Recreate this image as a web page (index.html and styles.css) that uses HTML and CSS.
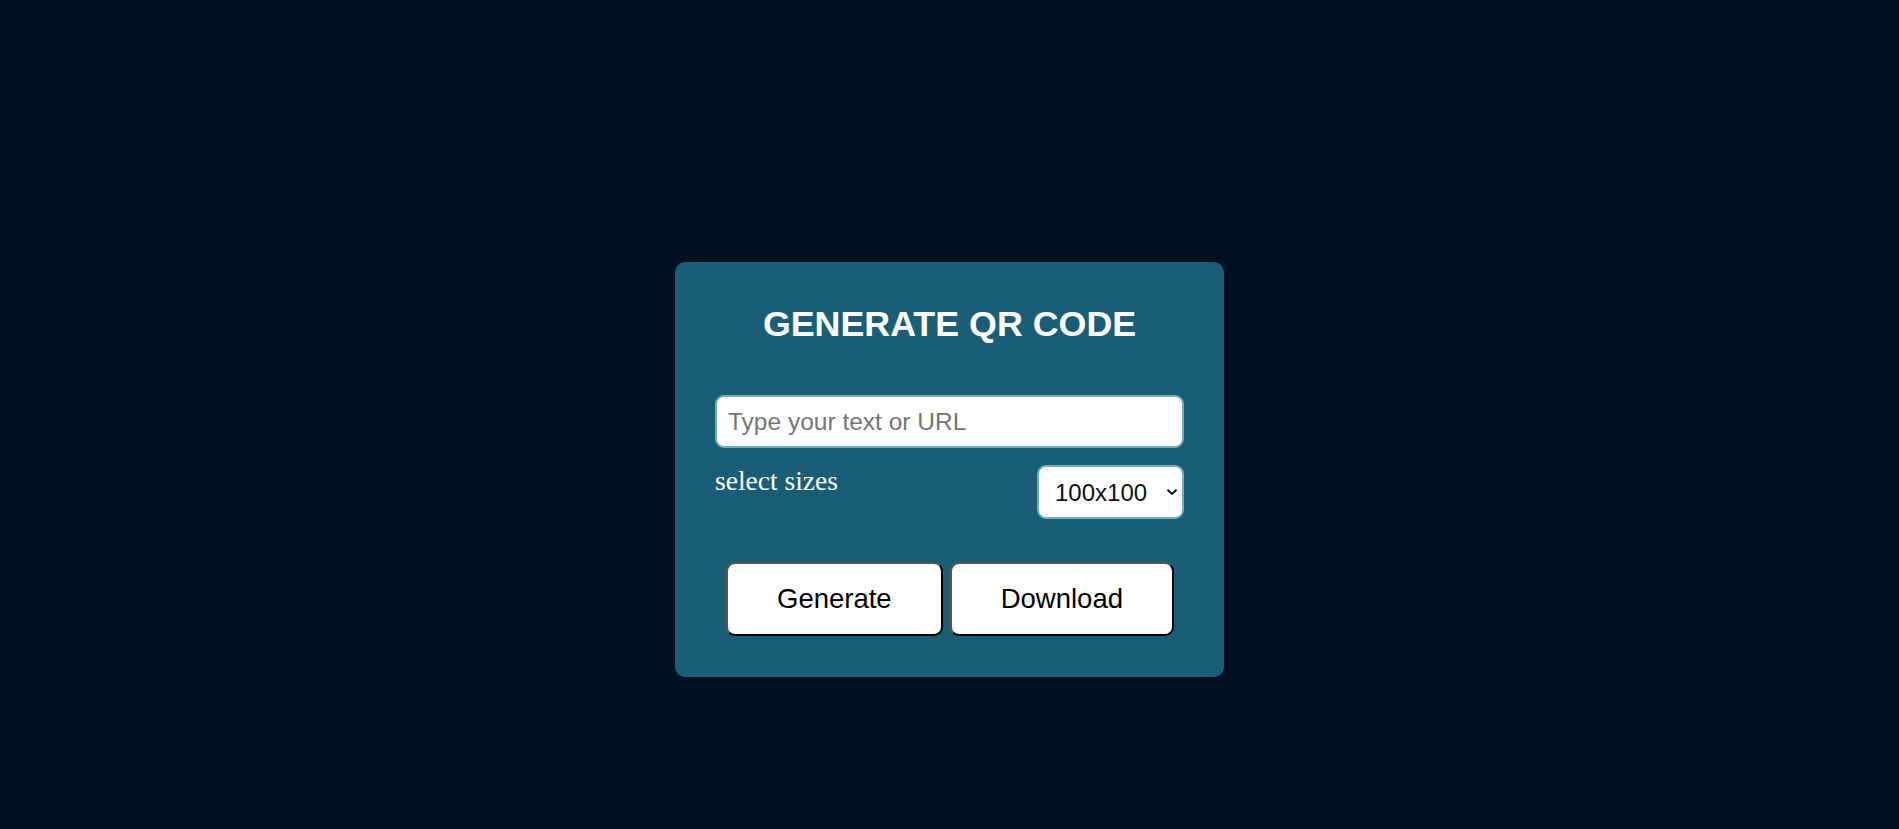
FILE: index.html
```html
<!DOCTYPE html>
<html lang="en">
<head>
<meta charset="utf-8">
<title>QR Code Generator</title>
<link rel="stylesheet" href="styles.css">
</head>
<body>
  <main class="page">
    <section class="card">
      <h1 class="title">GENERATE QR CODE</h1>
      <input class="text-input" type="text" placeholder="Type your text or URL">
      <div class="size-row">
        <span class="size-label">select sizes</span>
        <div class="select-wrap">
          <select class="size-select">
            <option>100x100</option>
            <option>200x200</option>
            <option>300x300</option>
          </select>
          <svg class="chevron" width="12" height="8" viewBox="0 0 12 8"><path d="M1.5 1.8 L6 6 L10.5 1.8" fill="none" stroke="#111" stroke-width="2"/></svg>
        </div>
      </div>
      <div class="actions">
        <button class="btn">Generate</button>
        <button class="btn">Download</button>
      </div>
    </section>
  </main>
</body>
</html>
```
FILE: styles.css
```css
* { box-sizing: border-box; }
html, body { margin: 0; height: 100%; }
body {
  background: #001220;
  font-family: "Liberation Sans", Arial, sans-serif;
}
.page {
  height: 100%;
  display: flex;
  justify-content: center;
  padding-top: 262px;
}
.card {
  width: 549px;
  height: 415px;
  background: #195e76;
  border-radius: 10px;
  padding: 42px 40px 41px;
  display: flex;
  flex-direction: column;
}
.title {
  margin: 0;
  color: #fff;
  font-size: 35.8px;
  line-height: 40px;
  font-weight: bold;
  text-align: center;
}
.text-input {
  margin-top: 51px;
  height: 53px;
  width: 100%;
  border: 2px solid #74acc0;
  border-radius: 9px;
  padding: 0 11px;
  font-family: "Liberation Sans", Arial, sans-serif;
  font-size: 24.5px;
  color: #111;
  background: #fff;
  outline: none;
}
.text-input::placeholder { color: #757575; }
.size-row {
  margin-top: 17px;
  display: flex;
  justify-content: space-between;
  align-items: flex-start;
}
.size-label {
  color: #fff;
  font-family: "Liberation Serif", "Times New Roman", serif;
  font-size: 27.5px;
  line-height: 30px;
  padding-top: 1px;
}
.select-wrap {
  position: relative;
}
.size-select {
  appearance: none;
  -webkit-appearance: none;
  width: 147px;
  height: 54px;
  border: 2px solid #74acc0;
  border-radius: 9px;
  background: #fff;
  padding: 0 0 0 16px;
  font-family: "Liberation Sans", Arial, sans-serif;
  font-size: 24px;
  color: #111;
  outline: none;
}
.chevron {
  position: absolute;
  right: 6px;
  top: 23px;
  pointer-events: none;
}
.actions {
  margin-top: 43px;
  display: flex;
  justify-content: center;
  gap: 7px;
  padding-left: 1px;
}
.btn {
  height: 74px;
  padding: 0 49px;
  background: #fff;
  color: #000;
  font-family: "Liberation Sans", Arial, sans-serif;
  font-size: 27.5px;
  border-width: 2px;
  border-style: solid;
  border-color: #555 #000 #000 #555;
  border-radius: 9px;
  cursor: pointer;
}
```
